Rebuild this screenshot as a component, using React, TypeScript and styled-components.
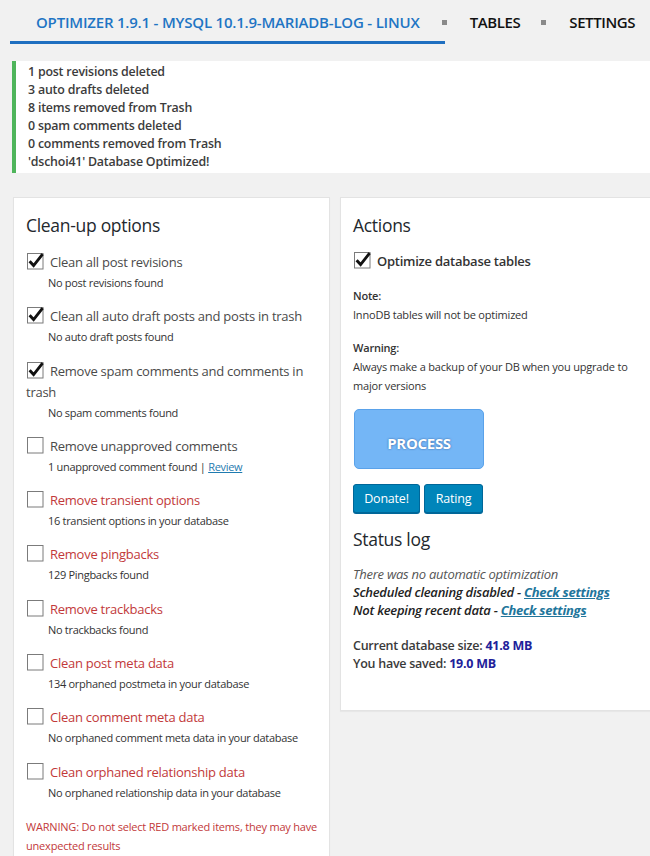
import React from "react";
import styled, { createGlobalStyle } from "styled-components";

const GlobalStyle = createGlobalStyle`
  html, body { margin: 0; padding: 0; overflow: hidden; }
  body {
    background: #f1f1f1;
    font-family: "Open Sans", "Noto Sans", "DejaVu Sans", sans-serif;
    color: #444;
  }
`;

const Page = styled.div`
  width: 660px;
`;

const Nav = styled.nav`
  display: flex;
  align-items: flex-start;
  padding: 12px 0 0 10px;
  font-size: 15px;
  font-weight: 600;
  letter-spacing: -0.2px;
  line-height: 20px;
`;

const Tab = styled.a<{ $active?: boolean }>`
  display: block;
  color: ${(p) => (p.$active ? "#1f75c4" : "#111")};
  padding: ${(p) => (p.$active ? "0 25px 9px 26px" : "0")};
  border-bottom: ${(p) => (p.$active ? "3px solid #1f6fc0" : "none")};
  text-decoration: none;
  letter-spacing: ${(p) => (p.$active ? "-0.2px" : "-0.4px")};
`;

const Sep = styled.span<{ $first?: boolean }>`
  width: 5px;
  height: 5px;
  background: #8a8a8a;
  margin: 8px 23px 0 ${(p) => (p.$first ? "-3px" : "21px")};
`;

const Notice = styled.div`
  margin: 17px 0 0 12px;
  background: #fff;
  border-left: 4px solid #4fb55b;
  padding: 2px 12px;
  font-size: 12.4px;
  font-weight: 600;
  line-height: 18px;
  color: #3c3c3c;
  letter-spacing: -0.2px;
`;

const Columns = styled.div`
  display: flex;
  align-items: flex-start;
  gap: 10px;
  margin: 24px 0 0 13px;
`;

const Panel = styled.section<{ $width?: number }>`
  background: #fff;
  border: 1px solid #e3e3e3;
  box-shadow: 0 1px 1px rgba(0, 0, 0, 0.04);
  box-sizing: border-box;
  ${(p) => (p.$width ? `width: ${p.$width}px;` : "flex: 1;")}
  padding: 15px 12px 37px 12px;
`;

const Title = styled.h2`
  margin: 0 0 14px;
  font-size: 17.5px;
  font-weight: 500;
  line-height: 24px;
  color: #23282d;
  letter-spacing: -0.3px;
`;

const OptionList = styled.div`
  padding-top: 1px;
`;

const Item = styled.div`
  margin-bottom: 13.3px;
`;

const Label = styled.div<{ $red?: boolean; $strong?: boolean }>`
  font-size: 13px;
  line-height: 21px;
  letter-spacing: -0.25px;
  color: ${(p) => (p.$red ? "#c2393a" : p.$strong ? "#333" : "#4a4a4a")};
  font-weight: ${(p) => (p.$strong ? 600 : 400)};
`;

const Sub = styled.div`
  padding-left: 22px;
  font-size: 11px;
  line-height: 20px;
  color: #333;
  letter-spacing: -0.3px;
`;

const SmallLink = styled.a`
  color: #1f7bb0;
  text-decoration: underline;
`;

const BoxWrap = styled.span`
  display: inline-block;
  width: 17px;
  height: 17px;
  vertical-align: -3px;
  margin: 0 6px 0 1px;
`;

const Check = ({ checked }: { checked?: boolean }) => (
  <BoxWrap>
    <svg width="17" height="17" viewBox="0 0 17 17">
      <rect x="0.5" y="0.5" width="15.5" height="15.5" fill="#fff" stroke="#7b7b7b" />
      {checked && (
        <path
          d="M2.6 8.2 L6.6 12.6 L15.6 1.2"
          fill="none"
          stroke="#111"
          strokeWidth="2.9"
          strokeLinejoin="miter"
        />
      )}
    </svg>
  </BoxWrap>
);

const Warning = styled.p`
  margin: 14px 0 0;
  font-size: 11px;
  line-height: 19.5px;
  color: #c2393a;
  letter-spacing: -0.2px;
`;

const Note = styled.div`
  font-size: 11px;
  line-height: 19px;
  color: #333;
  letter-spacing: -0.2px;
  margin-top: 14px;
`;

const NoteHead = styled.div`
  font-weight: 600;
`;

const Process = styled.button`
  display: block;
  margin: 14px 0 0 1px;
  width: 130px;
  height: 60px;
  padding: 8px 0 0;
  border: 1px solid #5aa2ea;
  border-radius: 5px;
  background: #74b6f6;
  color: #fff;
  font-family: inherit;
  font-size: 15px;
  font-weight: 700;
  letter-spacing: -0.3px;
  text-shadow: 0 0 2px rgba(30, 70, 130, 0.8);
`;

const ButtonRow = styled.div`
  display: flex;
  gap: 4px;
  margin-top: 15px;
`;

const SmallButton = styled.button<{ $w: number }>`
  width: ${(p) => p.$w}px;
  height: 29px;
  background: #0085ba;
  border: 1px solid #006799;
  border-radius: 3px;
  box-shadow: 0 1px 0 #006799;
  color: #fff;
  font-family: inherit;
  font-size: 12.5px;
  letter-spacing: -0.2px;
  padding: 0;
`;

const StatusTitle = styled(Title)`
  margin: 14px 0 14px;
`;

const Status = styled.div`
  font-size: 12.5px;
  line-height: 18px;
  color: #333;
  letter-spacing: -0.25px;
`;

const Line = styled.div<{ $bold?: boolean }>`
  font-size: 13px;
  font-style: italic;
  font-weight: ${(p) => (p.$bold ? 600 : 400)};
  color: ${(p) => (p.$bold ? "#222" : "#555")};
`;

const StatLine = styled.div<{ $gap?: boolean }>`
  font-weight: 600;
  color: #3a3a3a;
  margin-top: ${(p) => (p.$gap ? "18px" : "0")};
`;

const Value = styled.span`
  color: #21219a;
  font-weight: 700;
`;

const BigLink = styled.a`
  color: #21759b;
  font-weight: 700;
  text-decoration: underline;
`;

type Opt = { label: React.ReactNode; sub: React.ReactNode; checked?: boolean; red?: boolean };

const options: Opt[] = [
  { label: "Clean all post revisions", sub: "No post revisions found", checked: true },
  { label: "Clean all auto draft posts and posts in trash", sub: "No auto draft posts found", checked: true },
  { label: "Remove spam comments and comments in trash", sub: "No spam comments found", checked: true },
  {
    label: "Remove unapproved comments",
    sub: (
      <>
        1 unapproved comment found | <SmallLink href="#">Review</SmallLink>
      </>
    ),
  },
  { label: "Remove transient options", sub: "16 transient options in your database", red: true },
  { label: "Remove pingbacks", sub: "129 Pingbacks found", red: true },
  { label: "Remove trackbacks", sub: "No trackbacks found", red: true },
  { label: "Clean post meta data", sub: "134 orphaned postmeta in your database", red: true },
  { label: "Clean comment meta data", sub: "No orphaned comment meta data in your database", red: true },
  { label: "Clean orphaned relationship data", sub: "No orphaned relationship data in your database", red: true },
];

export default function App() {
  return (
    <Page>
      <GlobalStyle />
      <Nav>
        <Tab $active href="#">OPTIMIZER 1.9.1 - MYSQL 10.1.9-MARIADB-LOG - LINUX</Tab>
        <Sep $first />
        <Tab href="#">TABLES</Tab>
        <Sep />
        <Tab href="#">SETTINGS</Tab>
      </Nav>
      <Notice>
        1 post revisions deleted
        <br />3 auto drafts deleted
        <br />8 items removed from Trash
        <br />0 spam comments deleted
        <br />0 comments removed from Trash
        <br />'dschoi41' Database Optimized!
      </Notice>
      <Columns>
        <Panel $width={317}>
          <Title>Clean-up options</Title>
          <OptionList>
            {options.map((o, i) => (
              <Item key={i}>
                <Label $red={o.red}>
                  <Check checked={o.checked} />
                  {o.label}
                </Label>
                <Sub>{o.sub}</Sub>
              </Item>
            ))}
          </OptionList>
          <Warning>WARNING: Do not select RED marked items, they may have unexpected results</Warning>
        </Panel>
        <Panel>
          <Title>Actions</Title>
          <Label $strong>
            <Check checked />
            Optimize database tables
          </Label>
          <Note>
            <NoteHead>Note:</NoteHead>
            InnoDB tables will not be optimized
          </Note>
          <Note>
            <NoteHead>Warning:</NoteHead>
            Always make a backup of your DB when you upgrade to major versions
          </Note>
          <Process>PROCESS</Process>
          <ButtonRow>
            <SmallButton $w={67}>Donate!</SmallButton>
            <SmallButton $w={59}>Rating</SmallButton>
          </ButtonRow>
          <StatusTitle>Status log</StatusTitle>
          <Status>
            <Line>There was no automatic optimization</Line>
            <Line $bold>
              Scheduled cleaning disabled - <BigLink href="#">Check settings</BigLink>
            </Line>
            <Line $bold>
              Not keeping recent data - <BigLink href="#">Check settings</BigLink>
            </Line>
            <StatLine $gap>
              Current database size: <Value>41.8 MB</Value>
            </StatLine>
            <StatLine>
              You have saved: <Value>19.0 MB</Value>
            </StatLine>
          </Status>
        </Panel>
      </Columns>
    </Page>
  );
}
